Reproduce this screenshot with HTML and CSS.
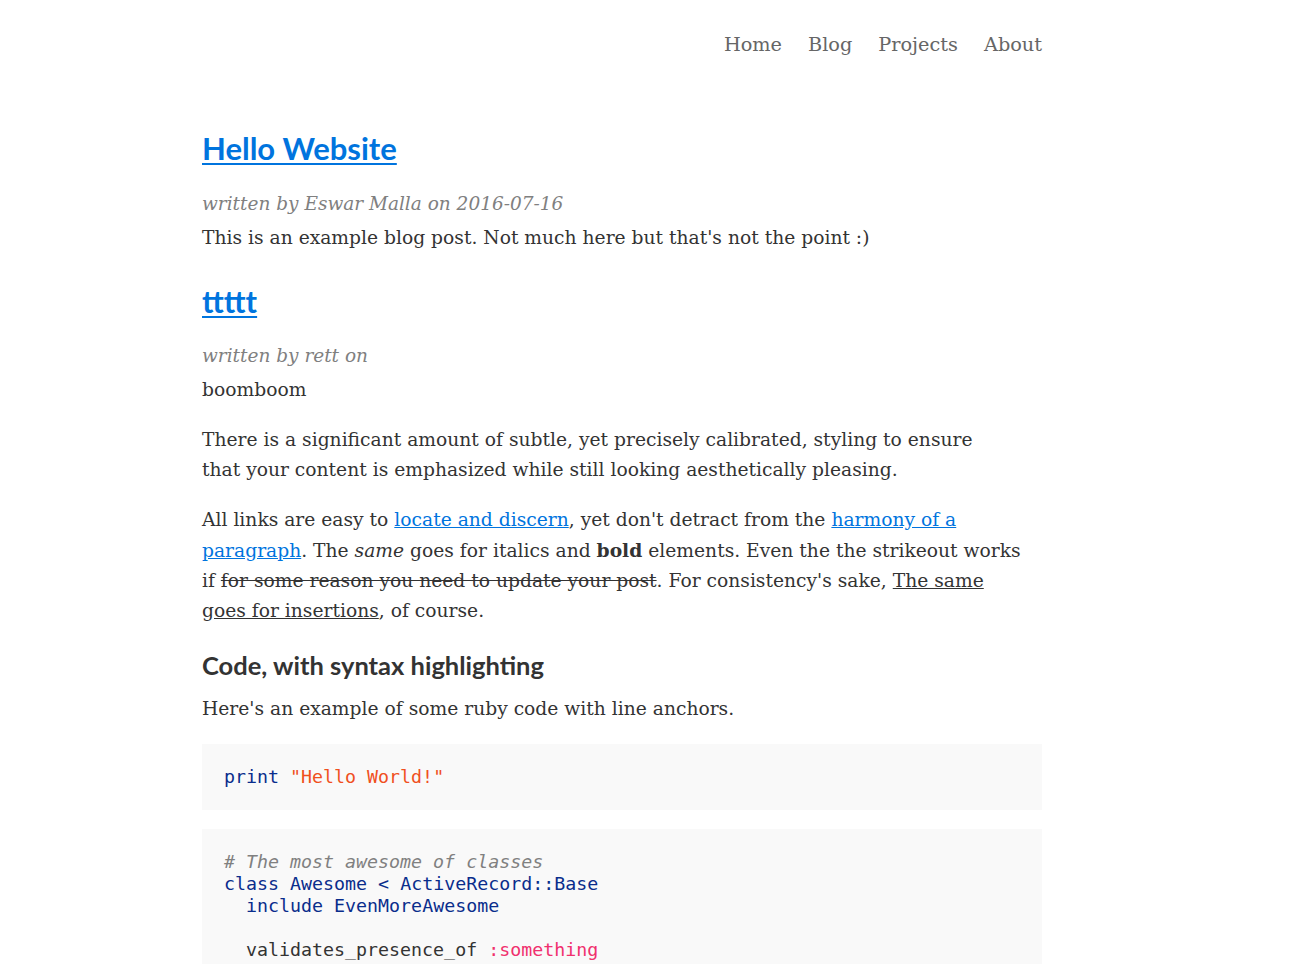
FILE: index.html
```html
<!DOCTYPE html>
<html lang="en">
<head>
<meta charset="utf-8">
<title>Hello Website</title>
<link rel="stylesheet" href="styles.css">
</head>
<body>
<div class="page">
  <header class="site-header">
    <nav class="nav">
      <a href="#">Home</a>
      <a href="#">Blog</a>
      <a href="#">Projects</a>
      <a href="#">About</a>
    </nav>
  </header>
  <main class="content">
    <article class="post">
      <h2 class="post-title"><a href="#">Hello Website</a></h2>
      <p class="meta">written by Eswar Malla on 2016-07-16</p>
      <p class="text">This is an example blog post. Not much here but that's not the point :)</p>
    </article>
    <article class="post">
      <h2 class="post-title"><a href="#">ttttt</a></h2>
      <p class="meta">written by rett on</p>
      <p class="text">boomboom</p>
      <p class="para">There is a significant amount of subtle, yet precisely calibrated, styling to ensure that&nbsp;your content is emphasized while still looking aesthetically pleasing.</p>
      <p class="para">All links are easy to <a href="#">locate and discern</a>, yet don't detract from the <a href="#">harmony of a paragraph</a>. The <em>same</em> goes for italics and <strong>bold</strong> elements. Even the the strikeout works if&nbsp;<del>for some reason you need to update your post</del>. For consistency's sake, <ins>The same goes&nbsp;for insertions</ins>, of course.</p>
      <h3 class="section-title">Code, with syntax highlighting</h3>
      <p class="intro">Here's an example of some ruby code with line anchors.</p>
      <pre class="code"><span class="kw">print</span> <span class="str">"Hello World!"</span></pre>
      <pre class="code"><span class="cm"># The most awesome of classes</span>
<span class="kw">class</span> <span class="cls">Awesome</span> <span class="kw">&lt;</span> <span class="cls">ActiveRecord</span><span class="kw">::</span><span class="cls">Base</span>
  <span class="kw">include</span> <span class="cls">EvenMoreAwesome</span>

  validates_presence_of <span class="sym">:something</span>
  validates <span class="sym">:email</span>, <span class="sym">email_format:</span> <span class="kw">true</span>
</pre>
    </article>
  </main>
</div>
</body>
</html>
```
FILE: styles.css
```css
html, body {
  margin: 0;
  padding: 0;
  background: #fff;
}

body {
  font-family: "DejaVu Serif", "Liberation Serif", serif;
  color: #333;
  font-size: 18.7px;
  line-height: 30px;
}

.page {
  width: 840px;
  margin-left: 202px;
}

.site-header {
  display: flex;
  justify-content: flex-end;
  padding-top: 30px;
}

.nav {
  display: flex;
  gap: 26px;
}

.nav a {
  color: #666;
  text-decoration: none;
  font-size: 19.3px;
  line-height: 30px;
}

.content {
  padding-top: 70px;
}

.post-title {
  margin: 0 0 23px;
  font-family: "Lato", sans-serif;
  font-weight: 700;
  font-size: 31px;
  line-height: 36px;
}

.post + .post .post-title {
  margin: 30px 0 22px;
}

.post-title a {
  color: #0074de;
  text-decoration: underline;
  text-decoration-thickness: 2px;
  text-underline-offset: 3px;
}

.meta {
  margin: 0 0 4px;
  font-style: italic;
  font-size: 18.5px;
  color: #808080;
}

.text, .para, .intro {
  margin: 0;
}

.para {
  margin-top: 20px;
}

.para a {
  color: #0074de;
}

.section-title {
  margin: 24px 0 14px;
  font-family: "Lato", sans-serif;
  font-weight: 700;
  font-size: 25.5px;
  line-height: 30px;
  color: #333;
}

.intro {
  margin-bottom: 20px;
}

.code {
  margin: 0 0 19px;
  padding: 22px;
  background: #f9f9f9;
  font-family: "DejaVu Sans Mono", "Liberation Mono", monospace;
  font-size: 18.3px;
  line-height: 22px;
  color: #333;
}

.kw, .cls {
  color: #0a2d8c;
}

.str {
  color: #f0501e;
}

.cm {
  color: #808080;
  font-style: italic;
}

.sym {
  color: #f0306e;
}
```
